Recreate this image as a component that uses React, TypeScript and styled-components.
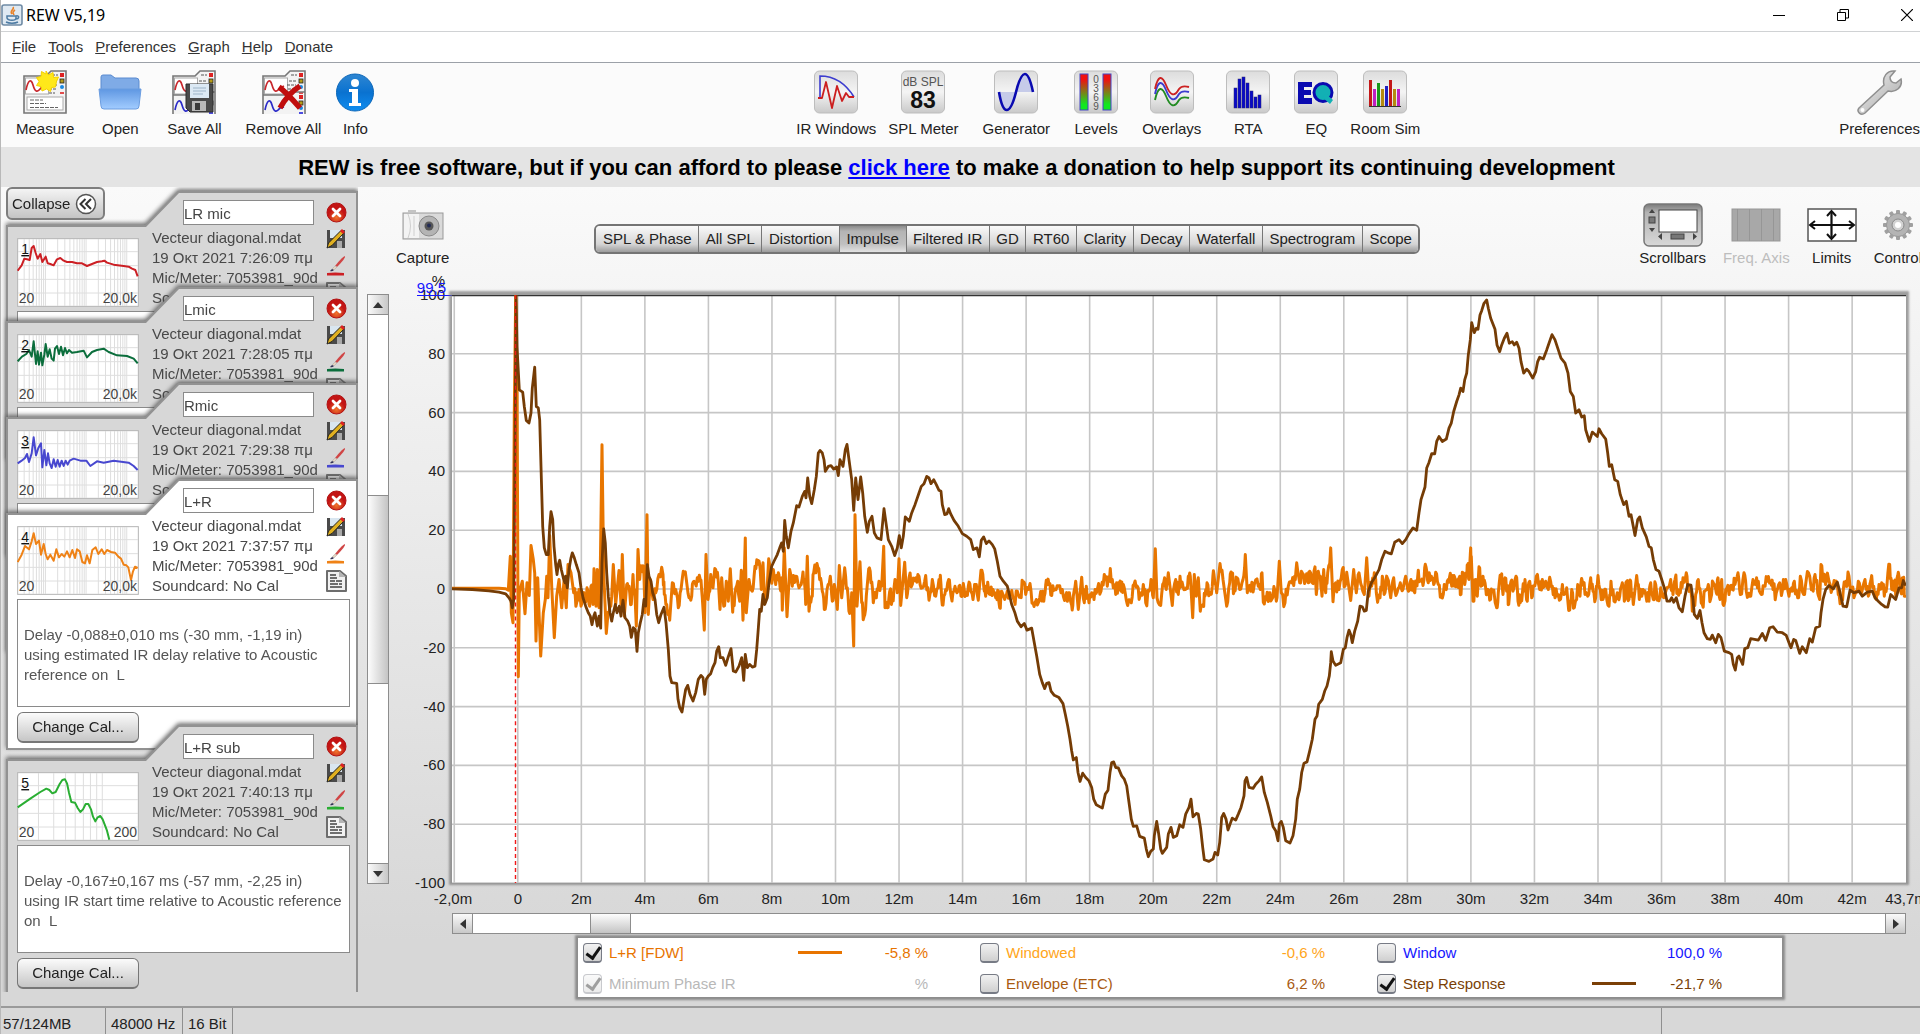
import React from "react";
import styled, { createGlobalStyle, css } from "styled-components";

const GlobalStyle = createGlobalStyle`
  * { box-sizing: border-box; }
  html, body, #root { height: 100%; }
  body {
    margin: 0;
    overflow: hidden;
    background: #fff;
    color: #222;
    font: 15px/18px "Liberation Sans", Arial, sans-serif;
  }
  button, input, textarea { font: inherit; color: inherit; margin: 0; }
  button { cursor: pointer; }
  svg { display: block; }
`;

/* ---------- frame ---------- */

const Window = styled.div`
  display: flex;
  flex-direction: column;
  height: 100vh;
  min-height: 700px;
  overflow: hidden;
  border-left: 1px solid #b8b8b8;
`;

const TitleBar = styled.header`
  display: flex;
  align-items: center;
  height: 32px;
  padding: 0 7px 2px 0;
  gap: 3px;
  border-bottom: 1px solid #d0d2d4;
`;

const Title = styled.h1`
  flex: 1;
  margin: 0;
  color: #000;
  font: 400 16px/20px "Noto Sans", "Open Sans", sans-serif;
`;

const WindowControls = styled.div`
  display: flex;
  gap: 52px;
`;

const BareButton = styled.button`
  display: block;
  padding: 0;
  border: 0;
  background: none;
`;

const MenuBar = styled.nav`
  display: flex;
  align-items: center;
  gap: 12px;
  height: 31px;
  padding-left: 11px;
  border-bottom: 1px solid #9ca1a8;
`;

const MenuItem = styled.button`
  padding: 0;
  border: 0;
  background: none;
  color: #333;
`;

const Toolbar = styled.div`
  display: flex;
  justify-content: space-between;
  height: 84px;
  padding: 7px 0 0 15px;
  background: #fbfbfb;
`;

const ToolGroup = styled.div`
  display: flex;
`;

const Tool = styled.button<{ $lead?: number; $muted?: boolean }>`
  display: flex;
  flex-direction: column;
  align-items: center;
  flex: none;
  gap: 6px;
  min-width: 44px;
  height: 70px;
  margin-left: ${(p) => p.$lead ?? 0}px;
  padding: 0;
  border: 0;
  background: none;
  color: ${(p) => (p.$muted ? "#bdbdbd" : "#222")};
  white-space: nowrap;
`;

const IconSlot = styled.span`
  display: flex;
  align-items: center;
  justify-content: center;
  height: 44px;
`;

const Banner = styled.p`
  margin: 0;
  height: 40px;
  padding-right: 8px;
  background: #e4e4e4;
  color: #000;
  font-size: 22px;
  font-weight: 700;
  line-height: 42px;
  text-align: center;
  white-space: nowrap;

  a { color: #00f; }
`;

const Main = styled.main`
  display: flex;
  flex: 1;
  min-height: 0;
  background: linear-gradient(#fafafa, #d7d7d7 92%);
`;

/* ---------- measurement list ---------- */

const Sidebar = styled.aside`
  display: grid;
  flex: none;
  width: 357px;
  padding-bottom: 14px;
  min-height: 0;
`;

const CollapseButton = styled.button`
  grid-area: 1 / 1;
  z-index: 1;
  align-self: start;
  display: flex;
  align-items: center;
  justify-content: space-between;
  width: 99px;
  height: 33px;
  margin-left: 5px;
  padding: 0 6px 0 4px;
  border: 2px solid #7e7e7e;
  border-radius: 6px;
  background: linear-gradient(#f4f4f4, #c4c4c4);
`;

const CardList = styled.div`
  grid-area: 1 / 1;
  min-height: 0;
  padding: 4px 0 0 5px;
  overflow: hidden;
`;

const CardSlot = styled.div<{ $open?: boolean }>`
  height: ${(p) => (p.$open ? 246 : 96)}px;
  filter: drop-shadow(0 -2px 2px rgba(70, 70, 70, 0.75));
`;

const CardEdge = styled.article`
  width: 352px;
  height: 271px;
  padding: 2px;
  background: #929292;
  clip-path: polygon(0 34px, 139px 34px, 172px 0, 100% 0, 100% 100%, 0 100%);
`;

const CardFace = styled.div<{ $active?: boolean }>`
  height: 267px;
  padding: 7px 8px 0 9px;
  background: ${(p) => (p.$active ? "#fff" : "#d7d7d7")};
  clip-path: polygon(0 34px, 138px 34px, 171px 0, 100% 0, 100% 100%, 0 100%);
`;

const CardTop = styled.div`
  display: grid;
  grid-template-columns: 122px 162px 22px;
  column-gap: 12px;
  height: 111px;
`;

const Thumb = styled.div`
  height: 69px;
  margin-top: 38px;
`;

const NameInput = styled.input`
  display: block;
  width: 131px;
  height: 25px;
  margin: 0 0 3px 32px;
  padding: 2px 0 0;
  border: 1px solid #8a8a8a;
  background: #fff;
  color: #444;
  outline: 0;
`;

const InfoText = styled.div`
  padding-left: 1px;
  color: #484848;
  line-height: 20px;
  white-space: nowrap;
`;

const IconColumn = styled.div`
  display: flex;
  flex-direction: column;
  align-items: center;
  gap: 6px;
  padding-top: 2px;
`;

const Notes = styled.textarea`
  display: block;
  width: 333px;
  height: 108px;
  margin: 0 0 5px;
  padding: 5px 6px;
  border: 1px solid #8a8a8a;
  background: #fff;
  color: #555;
  line-height: 20px;
  white-space: pre;
  overflow: hidden;
  resize: none;
  outline: 0;
`;

const CalButton = styled.button`
  width: 122px;
  height: 31px;
  border: 1px solid #777;
  border-bottom-width: 2px;
  border-radius: 6px;
  background: linear-gradient(#fbfbfb, #c6c6c6);
  color: #222;
`;

/* ---------- scrollbars ---------- */

const ScrollTrack = styled.div<{ $axis: "x" | "y" }>`
  display: flex;
  flex: none;
  background: #fff;
  border: 1px solid #8d8d8d;
  ${(p) =>
    p.$axis === "y"
      ? css`
          flex-direction: column;
          width: 22px;
          margin: 107px 0 122px 9px;
        `
      : css`
          height: 21px;
          margin: 0 14px 0 63px;
        `}
`;

const ScrollButton = styled.button<{ $axis: "x" | "y" }>`
  display: flex;
  align-items: center;
  justify-content: center;
  flex: 0 0 20px;
  padding: 0;
  border: 0 solid #8d8d8d;
  background: linear-gradient(to ${(p) => (p.$axis === "y" ? "right" : "bottom")}, #fafafa, #c8c8c8);

  &:first-child { border-${(p) => (p.$axis === "y" ? "bottom" : "right")}-width: 1px; }
  &:last-child { border-${(p) => (p.$axis === "y" ? "top" : "left")}-width: 1px; }
`;

const ScrollGap = styled.div<{ $share: number }>`
  flex: ${(p) => p.$share} 0 0;
`;

const ScrollThumb = styled.div<{ $share: number; $axis: "x" | "y" }>`
  flex: ${(p) => p.$share} 0 0;
  border: 0 solid #8d8d8d;
  border-width: ${(p) => (p.$axis === "y" ? "1px 0" : "0 1px")};
  background: linear-gradient(to ${(p) => (p.$axis === "y" ? "right" : "bottom")}, #fdfdfd, #c4c4c4);
`;

/* ---------- graph ---------- */

const GraphPane = styled.section`
  display: flex;
  flex-direction: column;
  flex: 1;
  min-width: 0;
`;

const GraphBar = styled.div`
  display: flex;
  align-items: flex-start;
  height: 108px;
  padding: 16px 0 0 7px;
`;

const GraphTools = styled.div`
  display: flex;
  gap: 17px;
  margin: 0 -2px 0 auto;
`;

const GraphTool = styled(Tool)`
  gap: 2px;
`;

const Tabs = styled.div`
  display: flex;
  width: 826px;
  height: 30px;
  margin: 21px 0 0 145px;
  border: 2px solid #747474;
  border-radius: 6px;
  overflow: hidden;
`;

const Tab = styled.button<{ $on?: boolean }>`
  flex: 1 1 auto;
  padding: 0 6px;
  border: 0;
  border-left: 1px solid #777;
  background: ${(p) =>
    p.$on
      ? "linear-gradient(#8c8c8c, #b4b4b4 20%, #c0c0c0 70%, #e2e2e2)"
      : "linear-gradient(#fafafa, #d4d4d4 70%, #9c9c9c)"};
  white-space: nowrap;

  &:first-child { border-left: 0; }
`;

const PlotRow = styled.div`
  display: flex;
  flex: 1;
  min-height: 0;
  margin-right: 14px;
`;

const YAxis = styled.svg`
  flex: 0 0 63px;
  width: 63px;
  height: 100%;
  overflow: visible;
`;

const Plot = styled.svg`
  flex: 1;
  min-width: 0;
  height: 100%;
  background: #fff;
  box-shadow: 0 -1px 2px 3px rgba(110, 110, 110, 0.65);
`;

const XAxis = styled.svg`
  flex: none;
  height: 30px;
  width: calc(100% - 77px);
  margin-left: 63px;
  overflow: visible;
`;

const Legend = styled.div`
  display: grid;
  grid-template-columns: repeat(3, 397px);
  align-content: start;
  flex: none;
  width: 1204px;
  height: 59px;
  margin: 4px 0 9px 189px;
  padding: 0 0 0 5px;
  background: #fff;
  box-shadow: 0 0 2px 3px rgba(110, 110, 110, 0.7);
`;

const Trace = styled.label<{ $tone: string }>`
  display: grid;
  grid-template-columns: 19px 172px 54px 79px;
  column-gap: 7px;
  align-items: center;
  height: 31px;
  padding-bottom: 2px;
  color: ${(p) => p.$tone};
`;

const Check = styled.input`
  appearance: none;
  position: relative;
  width: 19px;
  height: 20px;
  border: 1px solid #777b85;
  border-bottom-width: 2px;
  border-radius: 4px;
  background: linear-gradient(#f2f2f2, #cfcfcf);

  &:disabled { opacity: 0.4; }

  &:checked::after {
    content: "";
    position: absolute;
    left: 5px;
    top: 0;
    width: 6px;
    height: 12px;
    border: solid #111;
    border-width: 0 3px 3px 0;
    transform: rotate(35deg);
  }
`;

const Swatch = styled.span<{ $show?: boolean }>`
  width: 44px;
  height: 3px;
  justify-self: end;
  background: ${(p) => (p.$show ? "currentColor" : "transparent")};
`;

const Reading = styled.output`
  text-align: right;
`;

const StatusBar = styled.footer`
  display: flex;
  height: 28px;
  flex: none;
  border-top: 2px solid #9a9a9a;
  background: #d8d8d8;
  line-height: 32px;
`;

const StatusCell = styled.div<{ $width?: number; $grow?: boolean }>`
  flex: ${(p) => (p.$grow ? "1 0 0" : `0 0 ${p.$width}px`)};
  padding-left: ${(p) => (p.$width === 105 ? 2 : 5)}px;
  border-right: 1px solid #8f8f8f;
  overflow: hidden;

  &:last-child { border-right: 0; }
`;

/* ---------- icons ---------- */

const JavaIcon = () => (
  <svg width="22" height="22" viewBox="0 0 22 22">
    <rect x="1" y="1" width="20" height="20" rx="2" fill="#dfe9f2" stroke="#6f8ba5" strokeWidth="1.6" />
    <path d="M12 3c2 2-4 4-1 7M14 6c-3 2-2 3-1 5" fill="none" stroke="#e8832a" strokeWidth="1.6" />
    <path d="M6 12h9v2c0 3-8 3-9 0zM15 12c4-1 3 3 0 3M5 18c3 1.500 9 1.500 12 0" fill="none" stroke="#4d7ba3" strokeWidth="1.5" />
  </svg>
);

const SheetBase = ({ two }: { two?: boolean }) => (
  <>
    <path d={two ? "M1 44V6h22l5-5h15v43" : "M1 6h22l5-5h15v42H1z"} fill="#f3f3f3" stroke="#777" strokeWidth="1.6" />
    <rect x="2.500" y="8" width="23" height="16" fill="#fff" stroke="#aaa" />
    <path d="M3 20c2-10 5-12 7-5s4 8 8 3l4-2" fill="none" stroke="#c8282d" strokeWidth="1.7" />
    <path d="M29 5h6M27 11h8M25 15h9M26 19h8M26 23h6" stroke="#555" strokeWidth="1" strokeDasharray="3 1" />
    <rect x="37" y="3" width="4" height="4" fill="#d22" />
    <rect x="37" y="9" width="4" height="4" fill="#b59a18" stroke="#222" strokeWidth="0.800" />
    <circle cx="39" cy="17" r="2" fill="#1a88e0" />
    <path d="M37 23h4" stroke="#d22" strokeWidth="1.600" />
    {two ? (
      <>
        <path d="M1 25h22l4-3h16" fill="none" stroke="#777" strokeWidth="1.600" />
        <path d="M3 40c2-10 5-12 7-5s4 8 8 3l4-1" fill="none" stroke="#2a2ac8" strokeWidth="1.700" />
        <rect x="37" y="25" width="4" height="4" fill="#d22" />
        <rect x="37" y="31" width="4" height="4" fill="#b59a18" stroke="#222" strokeWidth="0.800" />
        <circle cx="39" cy="38" r="2" fill="#1a88e0" />
        <path d="M37 43h4" stroke="#22d" strokeWidth="1.600" />
      </>
    ) : (
      <>
        <rect x="4" y="27" width="36" height="13" fill="#fff" stroke="#aaa" />
        <path d="M7 30h13M7 33.500h16M7 37.500h28" stroke="#666" strokeDasharray="4 1" />
      </>
    )}
  </>
);

const MeasureIcon = () => (
  <svg width="44" height="44" viewBox="0 0 44 44">
    <SheetBase />
    <path
      d="M23 1l2.500 4 4.500-2.500.500 5 5-.500-2 4.500L33 14l-.500 3-4 .500-1 4-4-2.500-4.500 2-1-4.500-4.500-1 2.500-4-2.500-4 4.500-1 .500-5 4.500 2.500z"
      fill="#ffe81a"
      stroke="#f4d000"
    />
  </svg>
);

const FolderIcon = () => (
  <svg width="44" height="36" viewBox="0 0 44 36">
    <defs>
      <linearGradient id="folder" x2="0" y2="1">
        <stop offset="0" stopColor="#5f97e2" />
        <stop offset="1" stopColor="#a2ccff" />
      </linearGradient>
    </defs>
    <path d="M3 17V3q0-2 2-2h8l4 3h21q3 0 3 3v10z" fill="#7fabe6" stroke="#5a8bd0" />
    <path d="M1 15h42l-2 17q0 3-3 3H6q-3 0-3-3z" fill="url(#folder)" stroke="#6b9de0" />
  </svg>
);

const SaveAllIcon = () => (
  <svg width="44" height="44" viewBox="0 0 44 44">
    <SheetBase two />
    <path d="M14 14h27v28H18l-4-4z" fill="#4a4a4a" stroke="#2c2c2c" />
    <rect x="18" y="14" width="19" height="14" fill="#dce9f4" />
    <path d="M21 18h13M21 21h13M21 24h10" stroke="#9db4c8" />
    <rect x="20" y="31" width="14" height="10" fill="#b9b9b9" />
    <rect x="23" y="33" width="5" height="7" fill="#3a3a3a" />
  </svg>
);

const RemoveAllIcon = () => (
  <svg width="44" height="44" viewBox="0 0 44 44">
    <SheetBase two />
    <path d="M17 17c7 5 14 13 21 21M38 16c-8 5-15 13-20 22" stroke="#c00d0d" strokeWidth="5.500" fill="none" />
  </svg>
);

const InfoIcon = () => (
  <svg width="38" height="39" viewBox="0 0 38 39">
    <defs>
      <linearGradient id="info" x2="0" y2="1">
        <stop offset="0" stopColor="#2e86d2" />
        <stop offset="0.500" stopColor="#0a72d0" />
        <stop offset="1" stopColor="#0f8df0" />
      </linearGradient>
    </defs>
    <circle cx="19" cy="19.500" r="18.500" fill="url(#info)" stroke="#0b66b8" />
    <circle cx="19" cy="10" r="4" fill="#fff" />
    <path d="M13 16h9v14h3v3H13v-3h3V19h-3z" fill="#fff" />
  </svg>
);

const Tile = ({ children }: { children: React.ReactNode }) => (
  <svg width="44" height="44" viewBox="0 0 44 44">
    <defs>
      <linearGradient id="tile" x2="0" y2="1">
        <stop offset="0" stopColor="#dcdcdc" />
        <stop offset="0.500" stopColor="#f4f4f4" />
        <stop offset="1" stopColor="#c9c9c9" />
      </linearGradient>
    </defs>
    <rect x="0.500" y="1" width="43" height="42" rx="5" fill="url(#tile)" stroke="#bdbdbd" />
    {children}
  </svg>
);

const IrWindowsIcon = () => (
  <Tile>
    <path d="M6 28V6c14 0 26 8 34 21" fill="none" stroke="#3c3ccf" strokeWidth="1.600" />
    <path d="M4 28h4l4-16 6 26 5-22 5 15 4-8 3 4h5" fill="none" stroke="#cc1f1f" strokeWidth="1.800" strokeLinejoin="round" />
  </Tile>
);

const SplIcon = () => (
  <Tile>
    <text x="22" y="16" fontSize="12" textAnchor="middle" fill="#555">dB SPL</text>
    <text x="22" y="38" fontSize="23" fontWeight="700" textAnchor="middle" fill="#111">83</text>
  </Tile>
);

const GeneratorIcon = () => (
  <Tile>
    <path d="M5 22c4 24 11 24 17 0zM22 22c5-23 11-23 17 0z" fill="#c6cbe9" />
    <path d="M5 22c4 24 11 24 17 0s12-24 17 0" fill="none" stroke="#0a0ab0" strokeWidth="2.600" />
  </Tile>
);

const LevelsIcon = () => (
  <Tile>
    <defs>
      <linearGradient id="level" x2="0" y2="1">
        <stop offset="0.150" stopColor="#f01010" />
        <stop offset="0.850" stopColor="#10e820" />
      </linearGradient>
    </defs>
    {[6, 29].map((x) => (
      <rect key={x} x={x} y="4" width="8" height="36" fill="url(#level)" stroke="#4444c4" />
    ))}
    {["0", "3", "6", "9"].map((n, i) => (
      <text key={n} x="22" y={13 + i * 9} fontSize="10" textAnchor="middle" fill="#555">{n}</text>
    ))}
  </Tile>
);

const OverlaysIcon = () => (
  <Tile>
    {[
      ["#228b22", 11],
      ["#3c3ccf", 5],
      ["#cc2222", 0],
    ].map(([c, dy]) => (
      <path
        key={c}
        transform={`translate(0 ${dy})`}
        d="M5 19C8 5 12 5 16 15s8 13 13 4q3-4 10-2"
        fill="none"
        stroke={c as string}
        strokeWidth="1.900"
      />
    ))}
  </Tile>
);

const RtaIcon = () => (
  <Tile>
    {[20, 29, 31, 25, 17, 11, 13].map((h, i) => (
      <rect key={i} x={8 + i * 4} y={38 - h} width="3" height={h} fill="#0a0ac8" stroke="#2a2a70" strokeWidth="0.500" />
    ))}
  </Tile>
);

const EqIcon = () => (
  <Tile>
    <path d="M4 12h14v5h-8v3h7v5h-7v3h8v6H4z" fill="#0a0ab0" />
    <circle cx="29" cy="22.500" r="9" fill="#12b0b4" stroke="#0a0ab0" strokeWidth="3" />
    <path d="M32 24l7 6-3 4-8-7z" fill="#12b0b4" />
  </Tile>
);

const RoomSimIcon = () => (
  <Tile>
    {[
      ["#c41818", 26],
      ["#c020c0", 17],
      ["#1a961a", 23],
      ["#b58a10", 17],
      ["#2020c0", 20],
      ["#c41818", 26],
      ["#b58a10", 17],
      ["#c020c0", 17],
    ].map(([c, h], i) => (
      <rect key={i} x={6 + i * 4} y={36 - (h as number)} width="3" height={h} fill={c as string} />
    ))}
    <path d="M6 36.500h32" stroke="#333" />
  </Tile>
);

const WrenchIcon = () => (
  <svg width="46" height="46" viewBox="0 0 46 46">
    <defs>
      <linearGradient id="steel" x2="1" y2="1">
        <stop offset="0" stopColor="#f6f6f6" />
        <stop offset="1" stopColor="#a4a4a4" />
      </linearGradient>
    </defs>
    <path
      d="M2 39 27 16c-2-8 3-15 11-14l-5 6q0 6 6 6l5-4c2 8-5 14-13 12L8 44c-4 3-9-1-6-5z"
      fill="url(#steel)"
      stroke="#8f8f8f"
      strokeWidth="1.500"
    />
    <circle cx="5.500" cy="41" r="2" fill="#fff" />
  </svg>
);

const CameraIcon = () => (
  <svg width="42" height="32" viewBox="0 0 42 32">
    <rect x="1" y="4" width="40" height="26" fill="#dadada" stroke="#999" />
    <rect x="2" y="5" width="15" height="24" fill="#f3f3f3" />
    <path d="M6 29q5-12 0-24M12 7v20" stroke="#cfcfcf" fill="none" />
    <rect x="6" y="1" width="8" height="3" fill="#c4c4c4" />
    <circle cx="27" cy="17" r="10" fill="#b4b4b4" stroke="#8a8a8a" />
    <circle cx="27" cy="17" r="4.500" fill="#555" />
    <circle cx="27" cy="16.500" r="2" fill="#222b55" />
  </svg>
);

const ScrollbarsIcon = () => (
  <svg width="60" height="44" viewBox="0 0 60 44">
    <defs>
      <linearGradient id="pressed" x2="0" y2="1">
        <stop offset="0" stopColor="#7a7a7a" />
        <stop offset="0.200" stopColor="#b2b2b2" />
        <stop offset="1" stopColor="#d8d8d8" />
      </linearGradient>
    </defs>
    <rect x="1" y="1" width="58" height="42" rx="5" fill="url(#pressed)" stroke="#777" strokeWidth="1.500" />
    <rect x="16" y="7" width="38" height="22" fill="#fff" stroke="#444" />
    <rect x="6" y="14" width="6" height="6" fill="#777" stroke="#444" />
    <rect x="28" y="31" width="13" height="5" fill="#777" stroke="#444" />
    <path d="M6 10l3-4 3 4zM6 25l3 4 3-4zM19 30v7l-4-3.500zM50 30v7l4-3.500z" fill="#444" />
  </svg>
);

const FreqAxisIcon = () => (
  <svg width="50" height="34" viewBox="0 0 50 34">
    <rect x="1" y="1" width="48" height="32" fill="#a8a8a8" stroke="#979797" />
    <path d="M6.500 1v32M18.500 1v32M30.500 1v32M42.500 1v32" stroke="#969696" />
  </svg>
);

const LimitsIcon = () => (
  <svg width="50" height="34" viewBox="0 0 50 34">
    <rect x="1" y="1" width="48" height="32" fill="#fff" stroke="#555" strokeWidth="1.500" />
    <path d="M4 17h42M24.500 4v26" stroke="#111" strokeWidth="2.200" />
    <path d="M8 13l-5 4 5 4M42 13l5 4-5 4M20 8l4.500-5 4.500 5M20 26l4.500 5 4.500-5" fill="none" stroke="#111" strokeWidth="2" />
  </svg>
);

const GearIcon = () => (
  <svg width="32" height="32" viewBox="0 0 32 32">
    <g fill="#a0a0a0">
      {Array.from({ length: 12 }, (_, i) => (
        <rect key={i} x="14" y="1" width="4" height="6" rx="1" transform={`rotate(${i * 30} 16 16)`} />
      ))}
    </g>
    <circle cx="16" cy="16" r="11.500" fill="#b4b4b4" stroke="#999" />
    <circle cx="16" cy="16" r="6" fill="#d2d2d2" stroke="#8a8a8a" />
    <circle cx="16" cy="16" r="3" fill="#fff" />
  </svg>
);

const DeleteIcon = () => (
  <svg width="21" height="21" viewBox="0 0 21 21">
    <defs>
      <radialGradient id="del" cy="0.750">
        <stop offset="0" stopColor="#f0762c" />
        <stop offset="0.900" stopColor="#c31414" />
      </radialGradient>
    </defs>
    <circle cx="10.500" cy="10.500" r="9.500" fill="url(#del)" stroke="#b01010" />
    <path d="M7 7l7 7M14 7l-7 7" stroke="#fff" strokeWidth="2.800" strokeLinecap="round" />
  </svg>
);

const SaveIcon = () => (
  <svg width="20" height="20" viewBox="0 0 20 20">
    <path d="M1 1h18v18H3l-2-2z" fill="#4a4a4a" />
    <rect x="4" y="1" width="12" height="8" fill="#d9e6f0" />
    <rect x="11" y="12" width="5" height="7" fill="#aaa" />
    <path d="M1 19l1.500-5L15 1.500l3 2.500L6 16.500z" fill="#e0b020" stroke="#222" strokeWidth="1" />
    <path d="M14 2l2-2 3 3-2 2z" fill="#d22" />
  </svg>
);

const BrushIcon = ({ color }: { color: string }) => (
  <svg width="20" height="21" viewBox="0 0 20 21">
    <path d="M19 1q1 2-8 11l-2-1q8-10 10-10z" fill="#d04545" />
    <path d="M9 11l2 1-3 3-2-1z" fill="#e6d4c0" stroke="#aaa" strokeWidth="0.500" />
    <path d="M6 14l2 1q-2 2-4 1z" fill="#335" />
    <path d="M1 18q8-1 17 0v2.500H1z" fill={color} />
  </svg>
);

const NoteIcon = () => (
  <svg width="22" height="22" viewBox="0 0 22 22">
    <path d="M2 1h13l6 5v15H2z" fill="#f2f2f2" stroke="#6d6d6d" strokeWidth="2" strokeLinejoin="round" />
    <path d="M14 1v6h7z" fill="#b5b5b5" />
    <path d="M5 5h6M5 8h7M5 11h5M11 11h6M5 14h8M14 14h3M5 17h12" stroke="#444" strokeWidth="1.300" />
  </svg>
);

const Arrow = ({ turn }: { turn: number }) => (
  <svg width="10" height="10" viewBox="0 0 10 10">
    <path d="M5 2l5 6H0z" fill="#333" transform={`rotate(${turn} 5 5)`} />
  </svg>
);

/* ---------- data ---------- */

type Measurement = {
  name: string;
  time: string;
  color: string;
  range: [string, string];
  decades: number;
  curve: string;
  active?: boolean;
  open?: boolean;
  notes: string;
};

const measurements: Measurement[] = [
  {
    name: "LR mic",
    time: "19 Οκτ 2021 7:26:09 πμ",
    color: "#cc1f24",
    range: ["20", "20,0k"],
    decades: 3,
    curve:
      "2,98 14,82 22,62 30,64 38,66 44,30 50,24 56,45 62,62 70,48 76,72 86,56 92,76 100,78 110,82 120,64 130,60 140,68 150,72 165,72 180,76 195,76 210,84 225,78 240,72 255,70 262,68 270,74 290,80 320,84 335,86 345,92 355,96 362,115",
    notes: "",
  },
  {
    name: "Lmic",
    time: "19 Οκτ 2021 7:28:05 πμ",
    color: "#0b6e3c",
    range: ["20", "20,0k"],
    decades: 3,
    curve:
      "2,82 15,68 28,60 36,48 44,68 50,22 57,90 62,52 66,92 72,56 76,94 82,62 86,30 92,68 98,46 104,74 110,80 114,44 120,36 126,60 132,38 138,64 144,42 150,58 156,48 165,56 180,54 200,50 210,70 225,54 240,48 260,44 275,54 300,64 330,66 350,74 362,88",
    notes: "",
  },
  {
    name: "Rmic",
    time: "19 Οκτ 2021 7:29:38 πμ",
    color: "#4848cf",
    range: ["20", "20,0k"],
    decades: 3,
    curve:
      "2,100 14,92 24,84 30,72 36,96 44,70 50,22 57,76 64,54 72,40 76,112 82,60 88,106 93,70 98,100 104,114 110,88 116,110 122,90 128,110 134,92 140,108 146,92 152,104 158,92 170,86 190,92 208,92 220,108 240,94 260,98 290,92 335,98 350,108 362,120",
    notes: "",
  },
  {
    name: "L+R",
    time: "19 Οκτ 2021 7:37:57 πμ",
    color: "#ef8216",
    range: ["20", "20,0k"],
    decades: 3,
    curve:
      "2,108 14,86 24,60 36,70 44,46 50,22 57,54 66,44 72,86 80,54 86,84 92,100 100,86 110,104 118,70 126,94 134,84 142,92 150,76 158,94 166,72 174,96 180,70 188,76 196,108 204,112 210,88 218,112 226,72 236,64 244,84 254,70 262,84 270,72 282,78 294,80 304,92 312,98 320,116 328,118 334,124 342,162 348,136 354,122 362,126",
    active: true,
    open: true,
    notes: "\nDelay -0,088±0,010 ms (-30 mm, -1,19 in)\nusing estimated IR delay relative to Acoustic\nreference on  L",
  },
  {
    name: "L+R sub",
    time: "19 Οκτ 2021 7:40:13 πμ",
    color: "#2aae33",
    range: ["20", "200"],
    decades: 1,
    curve:
      "2,106 40,80 70,60 88,50 97,54 106,64 116,60 128,36 136,24 144,22 150,34 156,62 163,90 174,92 182,108 190,120 198,112 206,96 214,96 222,112 228,134 235,148 242,136 250,132 257,142 264,160 270,176 277,203",
    open: true,
    notes: "\nDelay -0,167±0,167 ms (-57 mm, -2,25 in)\nusing IR start time relative to Acoustic reference\non  L",
  },
];

const leftTools = [
  { label: "Measure", icon: <MeasureIcon />, lead: 0 },
  { label: "Open", icon: <FolderIcon />, lead: 24 },
  { label: "Save All", icon: <SaveAllIcon />, lead: 25 },
  { label: "Remove All", icon: <RemoveAllIcon />, lead: 24 },
  { label: "Info", icon: <InfoIcon />, lead: 12 },
];

const centerTools = [
  { label: "IR Windows", icon: <IrWindowsIcon />, lead: 0 },
  { label: "SPL Meter", icon: <SplIcon />, lead: 12 },
  { label: "Generator", icon: <GeneratorIcon />, lead: 24 },
  { label: "Levels", icon: <LevelsIcon />, lead: 24 },
  { label: "Overlays", icon: <OverlaysIcon />, lead: 24 },
  { label: "RTA", icon: <RtaIcon />, lead: 25 },
  { label: "EQ", icon: <EqIcon />, lead: 24 },
  { label: "Room Sim", icon: <RoomSimIcon />, lead: 12 },
];

const tabs = [
  "SPL & Phase", "All SPL", "Distortion", "Impulse", "Filtered IR", "GD",
  "RT60", "Clarity", "Decay", "Waterfall", "Spectrogram", "Scope",
];

const traces = [
  { label: "L+R [FDW]", value: "-5,8 %", tone: "#e87400", on: true, line: true },
  { label: "Windowed", value: "-0,6 %", tone: "#ffa51a" },
  { label: "Window", value: "100,0 %", tone: "#1616ff" },
  { label: "Minimum Phase IR", value: "%", tone: "#b8b8b8", on: true, off: true },
  { label: "Envelope (ETC)", value: "6,2 %", tone: "#a85a10" },
  { label: "Step Response", value: "-21,7 %", tone: "#7a3f06", on: true, line: true },
];

/* Each run of samples is stored in thirds of a plot unit, from its own origin. */
type Run = { x: number; y: number; pts: string };

const stepRuns: Run[] = [
  {
    x: -13, y: -15,
    pts: "40,928 100,930 150,934 180,938 200,943 210,955 216,965 220,985 224,960 228,500 231,45 234,200 241,330 251,337 256,380 262,422 270,430 276,400 280,325 287,262 292,380 298,384 302,420 306,560 311,740 316,805 322,825 328,825 332,740 336,696 341,720 345,800 350,855 354,885 358,855 362,842 367,870 374,900 378,910 380,890 385,925 390,870 396,835 400,820 406,835 412,855 420,880 426,925 432,955 440,980 448,1000 454,1010 459,1036 464,1010 468,1000 475,1040 480,1010 485,1046 489,850 494,748 499,790 503,880 508,950 513,1000 518,1025 523,1000 529,975 534,1000 541,980 546,1010 552,962 558,1015 566,1025 572,1040 577,1074 583,1045 589,1050 594,1116 598,1060 604,1030 610,1005 615,960 620,980 625,855 630,890 636,905 641,940 648,960 653,1005 659,1030 666,1005 675,983 681,1030 688,1110 693,1190 698,1210 713,1212 717,1260 722,1285 729,1298 735,1260 740,1230 746,1218 753,1245 762,1265 770,1240 778,1200 786,1188 792,1195 797,1245 802,1200 808,1190 815,1183 821,1165 828,1150 833,1115 839,1102 844,1135 852,1135 860,1158 868,1132 876,1108 883,1175 890,1178 900,1160 908,1135 914,1203 919,1125 925,1165 932,1155 940,1163 948,1160 953,1110 957,1060 962,990 967,995 972,945 977,975 985,955 990,910 998,860 1005,845 1015,825 1022,805 1028,790 1033,815 1037,722 1042,770 1048,805 1056,755 1063,730 1073,678 1080,682 1090,650 1097,635 1101,655 1106,595 1112,650 1118,672 1126,630 1132,590 1138,520 1143,512 1150,520 1155,540 1159,575 1168,560 1176,558 1184,568 1193,562 1198,588 1203,540 1212,560 1219,510 1224,494 1230,540 1238,600 1244,692 1250,595 1257,660 1265,592 1271,640 1277,710 1285,758 1291,725 1299,710 1306,760 1314,775 1326,780 1335,687 1341,730 1348,780 1358,800 1367,828 1375,805 1381,768 1387,805 1393,770 1399,712 1411,725 1418,700 1428,675 1440,640 1447,620 1455,612 1463,590 1470,595 1476,612 1484,600 1492,615 1500,632",
  },
  {
    x: 447, y: 125,
    pts: "126,215 130,255 137,285 144,283 149,267 155,283 165,302 178,320 190,342 203,350 215,360 223,390 234,385 241,412 247,362 254,352 262,372 270,364 280,375 287,388 295,425 303,470 313,485 325,500 330,520 338,555 347,578 355,605 366,622 376,612 384,632 398,626 404,660 413,710 422,765 430,790 437,808 443,792 450,790 456,815 466,828 480,835 492,853 499,885 506,920 513,960 518,995 523,1022 532,1015 537,1060 543,1087 551,1062 560,1075 570,1085 578,1105 584,1140 592,1157 610,1167 619,1125 627,1113 633,1060 638,1030 644,1028 650,1045 658,1046 668,1070 676,1080 683,1100 690,1150 697,1200 703,1222 713,1220 722,1252 736,1257 742,1290 748,1313 755,1297 763,1290 766,1250 773,1207 779,1245 785,1290 790,1303 803,1285 808,1245 816,1225 823,1255 833,1250 842,1217 852,1225 860,1185 870,1165 876,1140 882,1193 892,1183 898,1185 905,1230 911,1285 916,1322 930,1327 942,1320 948,1300 956,1308 962,1270 968,1195 974,1183 981,1200 987,1233 995,1210 1000,1197 1010,1203 1018,1185 1026,1165 1035,1130 1038,1085 1043,1075 1050,1105 1062,1108 1070,1095 1080,1085 1088,1073 1096,1120 1105,1150 1115,1190 1122,1222 1130,1235 1137,1265 1141,1215 1147,1207 1153,1225 1160,1265 1173,1272 1182,1250 1190,1200 1195,1140 1202,1110 1208,1060 1215,1032 1224,1028 1232,995 1240,960 1248,900 1254,890 1259,855 1270,840 1277,815 1284,800 1291,770 1295,730 1297,697 1302,725 1310,738 1325,730 1333,690 1339,685 1344,655 1350,632 1355,645 1360,670 1367,635 1376,605 1383,560 1390,562 1396,575 1402,573 1408,515 1418,488 1428,473 1440,450 1448,420 1458,395 1467,400 1477,403 1487,368",
  },
  {
    x: 947, y: -15,
    pts: "0,780 10,792 20,780 30,762 42,745 53,752 60,700 66,660 78,622 83,565 90,548 98,522 107,522 113,485 120,470 130,485 142,478 150,445 157,430 164,395 173,365 180,345 185,325 192,335 197,300 203,280 208,225 214,180 218,128 226,158 232,145 237,148 243,105 248,92 255,70 263,60 268,85 275,115 288,148 294,195 302,215 308,195 316,175 324,160 331,190 340,185 346,195 353,187 360,205 366,245 374,280 383,268 390,275 401,295 410,275 416,245 422,232 433,237 443,210 450,190 459,164 468,180 478,210 486,235 498,250 507,280 514,335 523,350 530,400 540,390 548,412 556,408 560,450 571,485 580,457 595,470 600,447 608,462 620,478 626,520 631,560 638,555 647,600 656,605 664,645 674,675 682,665 690,710 696,705 708,768 716,720 722,712 730,745 742,772 750,800 757,805 763,840 771,870 780,875 788,900 796,925 804,965 812,965 818,955 824,968 832,955 840,985 850,997 858,950 866,915 876,917 882,960 886,1005 895,1017 903,993 909,1030 915,1060 925,1078 934,1080 940,1067 950,1090 958,1065 966,1075 976,1115 990,1120 998,1125 1003,1155 1009,1172 1015,1135 1020,1130 1031,1155 1037,1108 1046,1105 1055,1078 1078,1082 1090,1062 1100,1083 1112,1045 1122,1042 1135,1058 1150,1060 1162,1068 1170,1090 1176,1105 1184,1080 1190,1083 1202,1122 1210,1102 1222,1120 1232,1078 1240,1088 1250,1045 1262,1040 1266,1000 1272,960 1280,930 1290,918 1303,928 1315,908 1322,935 1332,980 1343,982 1353,932 1365,940 1380,935 1390,950 1405,938 1420,935 1428,955 1438,965 1448,975 1458,982 1466,983 1475,945 1490,960 1500,925 1508,925 1513,903 1518,915",
  },
];

const impulseRuns: Run[] = [
  {
    x: -13, y: -15,
    pts: "40,926 180,926 200,928 208,932 214,830 217,1000 222,1030 226,400 230,45 234,300 238,1192 241,940 250,905 258,1003 264,910 271,948 276,798 283,840 287,880 291,1085 296,895 305,1130 313,1000 319,960 323,890 327,955 332,768 338,920 346,1075 353,950 360,900 368,985 375,905 382,985 387,855 396,880 404,940 414,965 420,930 426,980 432,940 438,960 444,925 450,975 456,920 462,975 465,868 471,980 475,870 480,985 484,868 489,495 494,880 502,1062 510,1000 518,950 523,855 530,975 540,873 546,975 550,825 556,1010 563,915 570,920 577,975 582,885 588,950 592,1040 597,810 602,900 608,870 614,862 618,1000 624,705 628,1005 634,900 642,960 650,940 660,885 672,885 676,945 683,975 692,1022 700,910 710,930 718,985 726,930 733,875 742,900 750,955 758,950 765,905 775,895 784,900 790,955 796,1052 801,825 807,960 815,885 822,925 830,870 838,905 843,990 848,895 854,980 862,905 868,965 874,868 881,998 888,940 896,905 902,965 907,872 912,1022 919,775 922,1000 930,900 940,935 948,860 956,842 962,855 967,930 972,850 977,970 983,950 989,838 996,900 1003,870 1010,915 1018,880 1024,930 1028,895 1030,992 1036,805 1044,1012 1052,870 1060,920 1070,890 1080,925 1090,895 1096,900 1100,975 1105,830 1110,995 1118,950 1124,880 1134,852 1142,900 1150,935 1156,990 1164,930 1174,890 1180,965 1186,915 1195,990 1201,858 1208,955 1217,865 1225,925 1232,1002 1238,940 1244,1100 1248,705 1254,980 1263,847 1268,970 1275,1012 1282,950 1289,868 1296,910 1303,970 1312,955 1320,905 1328,920 1334,800 1338,985 1345,985 1352,935 1360,960 1368,900 1375,940 1380,838 1385,978 1397,848 1403,955 1410,895 1420,915 1430,895 1440,890 1450,925 1460,888 1470,962 1480,900 1490,950 1500,900",
  },
  {
    x: 447, y: 125,
    pts: "126,495 132,557 140,510 149,480 156,528 165,515 174,520 180,500 186,530 193,492 200,525 208,500 215,515 222,540 229,495 238,542 246,452 254,500 260,530 266,488 274,525 282,510 290,535 296,512 302,565 308,515 317,540 325,515 335,525 345,540 355,515 364,528 372,488 380,525 393,492 402,550 412,540 422,535 431,515 436,530 442,482 450,495 458,528 468,510 478,500 490,510 500,530 508,520 518,558 523,530 530,485 538,570 548,473 556,550 562,500 570,550 578,520 585,540 595,510 606,515 616,465 625,500 634,447 643,505 650,525 658,490 666,515 673,495 680,530 686,558 697,550 705,495 715,500 723,530 733,495 740,550 750,515 756,480 763,535 769,388 774,535 785,558 794,490 802,510 808,460 820,558 830,480 838,525 843,470 852,500 860,510 868,470 874,470 881,595 886,465 892,530 898,475 904,575 912,555 918,530 924,490 932,520 940,500 945,465 953,520 963,432 972,480 983,560 992,490 998,468 1006,515 1014,475 1022,510 1032,480 1039,405 1045,520 1055,515 1066,495 1078,500 1084,510 1089,460 1093,548 1102,540 1110,520 1118,540 1128,515 1134,535 1141,425 1147,520 1158,550 1168,500 1178,490 1187,470 1193,430 1202,490 1210,460 1220,480 1228,490 1232,455 1240,490 1248,442 1252,525 1258,455 1264,470 1269,530 1274,450 1280,520 1286,460 1295,385 1302,547 1310,490 1320,510 1330,450 1338,500 1343,458 1355,543 1364,450 1372,520 1380,460 1388,500 1396,525 1403,415 1410,530 1418,500 1426,460 1432,520 1443,535 1450,470 1458,520 1465,475 1475,535 1484,475 1494,520 1504,490 1512,510 1520,470 1528,515 1536,480 1545,515 1552,490",
  },
  {
    x: 947, y: -15,
    pts: "58,872 66,905 75,900 81,862 88,910 97,890 104,915 110,878 118,915 127,945 136,915 145,905 152,890 158,920 165,888 172,920 180,895 186,945 192,880 197,915 202,885 206,855 210,900 214,825 217,830 222,965 230,900 235,950 240,862 246,920 252,890 258,910 264,945 272,962 280,935 293,985 298,940 306,888 312,945 318,895 325,925 329,975 336,905 342,935 351,890 357,965 364,970 370,945 378,900 385,965 392,905 398,955 405,920 412,890 422,930 430,900 440,905 446,915 452,893 460,920 468,955 478,945 488,935 495,945 503,925 512,992 518,930 526,985 536,915 543,950 550,905 558,945 566,950 575,895 582,935 590,955 597,888 604,930 612,960 620,930 630,980 636,905 645,965 655,940 662,950 670,910 676,965 683,905 690,960 695,905 703,975 713,888 721,960 732,930 740,945 750,965 755,910 763,960 770,915 777,960 785,925 795,955 803,925 815,900 822,945 828,900 836,930 844,940 852,895 862,880 868,920 876,935 882,990 890,945 898,900 905,945 910,975 918,935 928,915 935,958 943,910 952,940 957,895 963,960 968,900 974,978 980,930 990,945 1000,930 1008,915 1017,880 1024,945 1035,880 1042,935 1052,950 1062,900 1070,915 1078,905 1087,945 1095,920 1105,905 1115,905 1122,930 1132,940 1142,910 1150,935 1160,900 1170,950 1178,925 1186,905 1196,955 1204,890 1214,945 1222,900 1232,890 1240,925 1248,885 1256,940 1262,960 1266,855 1273,905 1283,900 1290,905 1300,925 1308,910 1318,945 1326,960 1333,930 1341,905 1350,890 1358,935 1368,945 1378,905 1388,940 1398,900 1408,950 1415,905 1424,920 1432,960 1440,915 1448,910 1456,950 1464,915 1472,855 1478,930 1486,915 1492,935 1498,878 1505,935 1512,900 1518,950",
  },
];

const decode = (runs: Run[]): number[][] =>
  runs.flatMap((run) =>
    run.pts.split(" ").map((pair) => {
      const [px, py] = pair.split(",").map(Number);
      return [run.x + px / 3, run.y + py / 3];
    })
  );

/* Adds the small ripple that sits between the main excursions of the impulse. */
const withRipple = (points: number[][]): number[][] => {
  let seed = 41;
  const next = () => {
    seed = (seed * 1103515245 + 12345) % 2147483648;
    return seed / 2147483648 - 0.5;
  };
  return points.flatMap((p, i) => {
    const q = points[i + 1];
    if (!q || p[0] < 120 || Math.abs(q[1] - p[1]) > 26) return [p];
    return [1, 2].reduce(
      (list, k) => [...list, [p[0] + ((q[0] - p[0]) * k) / 3, p[1] + ((q[1] - p[1]) * k) / 3 + next() * 16]],
      [p]
    );
  });
};

const toPath = (points: number[][]) => "M" + points.map((p) => p.map((n) => n.toFixed(1)).join(" ")).join("L");

const PLOT_W = 1454;
const PLOT_H = 589;
const xAt = (ms: number) => 65.8 + ms * 31.77;
const yAt = (pct: number) => ((100 - pct) / 200) * PLOT_H;
const percent = (v: number, total: number) => `${(v / total) * 100}%`;

const xTicks = Array.from({ length: 22 }, (_, i) => i * 2);
const yTicks = [80, 60, 40, 20, 0, -20, -40, -60, -80, -100];

/* ---------- parts ---------- */

const ThumbGraph = ({ m, index }: { m: Measurement; index: number }) => {
  const lines: number[] = [];
  for (let d = 1; d < 10 ** (m.decades + 1); d *= 10)
    for (let n = 1; n < 10; n++) {
      const f = Math.log10((n * d) / 2) / m.decades;
      if (f > 0 && f < 1) lines.push(f * 366);
    }
  return (
    <svg width="122" height="69" viewBox="0 0 366 207">
      <rect x="2" y="2" width="362" height="203" fill="#fff" stroke="#b4b4b4" strokeWidth="3" />
      <g stroke="#dedede" strokeWidth="3">
        {lines.map((x) => (
          <path key={x} d={`M${x} 3V204`} />
        ))}
        {[41, 83, 124, 165].map((y) => (
          <path key={y} d={`M3 ${y}H363`} />
        ))}
      </g>
      <polyline points={m.curve} fill="none" stroke={m.color} strokeWidth="6" strokeLinejoin="round" />
      <g fontSize="42" fill="#444">
        <text x="13" y="48" textDecoration="underline" fill="#111">{index}</text>
        <text x="5" y="196">{m.range[0]}</text>
        <text x="360" y="196" textAnchor="end">{m.range[1]}</text>
      </g>
    </svg>
  );
};

const Card = ({ m, index }: { m: Measurement; index: number }) => (
  <CardSlot $open={m.open}>
    <CardEdge>
      <CardFace $active={m.active}>
        <CardTop>
          <Thumb>
            <ThumbGraph m={m} index={index} />
          </Thumb>
          <div>
            <NameInput aria-label={`Name of measurement ${index}`} defaultValue={m.name} />
            <InfoText>
              <div>Vecteur diagonal.mdat</div>
              <div>{m.time}</div>
              <div>Mic/Meter: 7053981_90d</div>
              <div>Soundcard: No Cal</div>
            </InfoText>
          </div>
          <IconColumn>
            <BareButton aria-label="Delete"><DeleteIcon /></BareButton>
            <BareButton aria-label="Save"><SaveIcon /></BareButton>
            <BareButton aria-label="Colour"><BrushIcon color={m.color} /></BareButton>
            <BareButton aria-label="Notes"><NoteIcon /></BareButton>
          </IconColumn>
        </CardTop>
        <Notes aria-label={`Notes ${index}`} defaultValue={m.notes} />
        <CalButton>Change Cal...</CalButton>
      </CardFace>
    </CardEdge>
  </CardSlot>
);

const ImpulseGraph = () => (
  <>
    <PlotRow>
      <YAxis fontSize="15" fill="#222" textAnchor="end">
        <text x="56" y="-9">%</text>
        <text x="56" y="5">100</text>
        <text x="57" y="-2" fill="#1616ff">99,5</text>
        <path d="M28 0.500H63" stroke="#1616ff" />
        {yTicks.map((t) => (
          <text key={t} x="56" y={percent(yAt(t), PLOT_H)} dy="5">{t}</text>
        ))}
      </YAxis>
      <Plot viewBox={`0 0 ${PLOT_W} ${PLOT_H}`} preserveAspectRatio="none">
        <g stroke="#c6c6c6" strokeWidth="1.600">
          {[-2, ...xTicks].map((t) => (
            <path key={t} d={`M${xAt(t)} 0V${PLOT_H}`} />
          ))}
          {yTicks.map((t) => (
            <path key={t} d={`M0 ${yAt(t)}H${PLOT_W}`} />
          ))}
        </g>
        <path d={`M0 0.500H${PLOT_W}`} stroke="#333" strokeWidth="1.500" />
        <g fill="none" strokeLinejoin="round" strokeLinecap="round">
          <path d={toPath(withRipple(decode(impulseRuns)))} stroke="#e87600" strokeWidth="3" />
          <path d={toPath(decode(stepRuns))} stroke="#753c05" strokeWidth="2.800" />
        </g>
        <path d={`M63.500 0V${PLOT_H}`} stroke="#f01818" strokeWidth="1.400" strokeDasharray="4 3" />
      </Plot>
    </PlotRow>
    <XAxis fontSize="15" fill="#222" textAnchor="middle">
      <text x={percent(1, PLOT_W)} y="21">-2,0m</text>
      {xTicks.map((t) => (
        <text key={t} x={percent(xAt(t), PLOT_W)} y="21">{t === 0 ? "0" : `${t}m`}</text>
      ))}
      <text x="100%" y="21">43,7m</text>
    </XAxis>
  </>
);

export default function App() {
  return (
    <Window>
      <GlobalStyle />
      <TitleBar>
        <JavaIcon />
        <Title>REW V5,19</Title>
        <WindowControls>
          <BareButton aria-label="Minimize">
            <svg width="12" height="12"><path d="M0 6.500H12" stroke="#000" /></svg>
          </BareButton>
          <BareButton aria-label="Restore">
            <svg width="12" height="12" fill="none" stroke="#000"><path d="M0.500 3.500h8v8h-8zM3 3V0.500h8.500V9H9" /></svg>
          </BareButton>
          <BareButton aria-label="Close">
            <svg width="12" height="12"><path d="M0 0L12 12M12 0L0 12" stroke="#000" strokeWidth="1.200" /></svg>
          </BareButton>
        </WindowControls>
      </TitleBar>
      <MenuBar>
        {["File", "Tools", "Preferences", "Graph", "Help", "Donate"].map((t) => (
          <MenuItem key={t}><u>{t[0]}</u>{t.slice(1)}</MenuItem>
        ))}
      </MenuBar>
      <Toolbar>
        {[leftTools, centerTools].map((group, i) => (
          <ToolGroup key={i}>
            {group.map((t) => (
              <Tool key={t.label} $lead={t.lead}>
                <IconSlot>{t.icon}</IconSlot>
                {t.label}
              </Tool>
            ))}
          </ToolGroup>
        ))}
        <Tool>
          <IconSlot><WrenchIcon /></IconSlot>
          Preferences
        </Tool>
      </Toolbar>
      <Banner>
        REW is free software, but if you can afford to please <a href="#donate">click here</a> to make a donation to help
        support its continuing development
      </Banner>
      <Main>
        <Sidebar>
          <CollapseButton>
            Collapse
            <svg width="22" height="22" viewBox="0 0 22 22" fill="none" stroke="#555">
              <circle cx="11" cy="11" r="9.500" fill="#fff" strokeWidth="1.500" />
              <path d="M10.500 6l-5 5 5 5M16 6l-5 5 5 5" stroke="#333" strokeWidth="2" />
            </svg>
          </CollapseButton>
          <CardList>
            {measurements.map((m, i) => (
              <Card key={m.name} m={m} index={i + 1} />
            ))}
          </CardList>
        </Sidebar>
        <ScrollTrack $axis="y">
          <ScrollButton $axis="y" aria-label="Scroll up"><Arrow turn={0} /></ScrollButton>
          <ScrollGap $share={181} />
          <ScrollThumb $axis="y" $share={188} />
          <ScrollGap $share={180} />
          <ScrollButton $axis="y" aria-label="Scroll down"><Arrow turn={180} /></ScrollButton>
        </ScrollTrack>
        <GraphPane>
          <GraphBar>
            <GraphTool>
              <IconSlot><CameraIcon /></IconSlot>
              Capture
            </GraphTool>
            <Tabs>
              {tabs.map((t) => (
                <Tab key={t} $on={t === "Impulse"}>{t}</Tab>
              ))}
            </Tabs>
            <GraphTools>
              <GraphTool><IconSlot><ScrollbarsIcon /></IconSlot>Scrollbars</GraphTool>
              <GraphTool $muted disabled><IconSlot><FreqAxisIcon /></IconSlot>Freq. Axis</GraphTool>
              <GraphTool><IconSlot><LimitsIcon /></IconSlot>Limits</GraphTool>
              <GraphTool><IconSlot><GearIcon /></IconSlot>Control</GraphTool>
            </GraphTools>
          </GraphBar>
          <ImpulseGraph />
          <ScrollTrack $axis="x">
            <ScrollButton $axis="x" aria-label="Scroll left"><Arrow turn={-90} /></ScrollButton>
            <ScrollGap $share={117} />
            <ScrollThumb $axis="x" $share={39} />
            <ScrollGap $share={1254} />
            <ScrollButton $axis="x" aria-label="Scroll right"><Arrow turn={90} /></ScrollButton>
          </ScrollTrack>
          <Legend>
            {traces.map((t) => (
              <Trace key={t.label} $tone={t.tone}>
                <Check type="checkbox" defaultChecked={t.on} disabled={t.off} />
                <span>{t.label}</span>
                <Swatch $show={t.line} />
                <Reading>{t.value}</Reading>
              </Trace>
            ))}
          </Legend>
        </GraphPane>
      </Main>
      <StatusBar>
        <StatusCell $width={105}>57/124MB</StatusCell>
        <StatusCell $width={77}>48000 Hz</StatusCell>
        <StatusCell $width={50}>16 Bit</StatusCell>
        <StatusCell $grow />
        <StatusCell $width={258} />
      </StatusBar>
    </Window>
  );
}
